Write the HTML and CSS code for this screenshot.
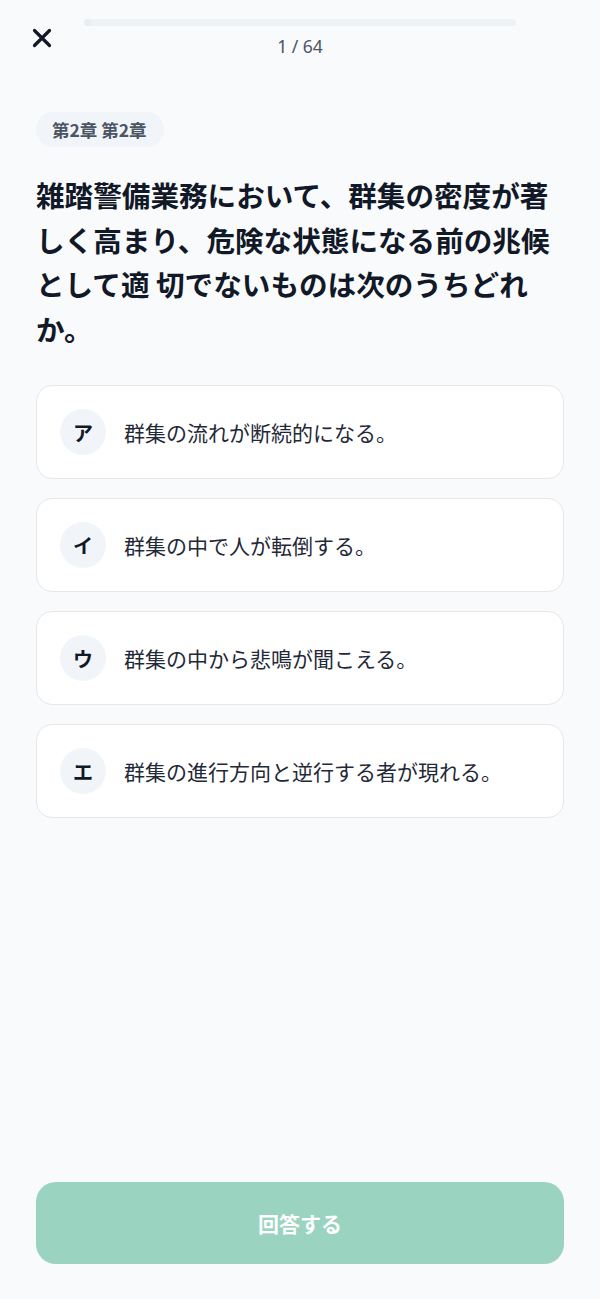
FILE: index.html
```html
<!DOCTYPE html>
<html lang="ja">
<head>
<meta charset="utf-8">
<title>Quiz</title>
<link rel="stylesheet" href="styles.css">
</head>
<body>
<div class="screen">
  <header class="header">
    <button class="close" aria-label="閉じる">
      <svg width="20" height="20" viewBox="0 0 20 20"><path d="M2.5 2.5 L17.5 17.5 M17.5 2.5 L2.5 17.5" stroke="#111827" stroke-width="3.2" stroke-linecap="round" fill="none"/></svg>
    </button>
    <div class="progress">
      <div class="bar"><div class="fill" style="width:1.5625%"></div></div>
      <div class="count">1 / 64</div>
    </div>
    <div></div>
  </header>

  <div class="tag">第2章 第2章</div>

  <h1 class="question">雑踏警備業務において、群集の密度が著しく高まり、危険な状態になる前の兆候として適 切でないものは次のうちどれか。</h1>

  <div class="options">
    <div class="option"><span class="badge">ア</span><span class="label">群集の流れが断続的になる。</span></div>
    <div class="option"><span class="badge">イ</span><span class="label">群集の中で人が転倒する。</span></div>
    <div class="option"><span class="badge">ウ</span><span class="label">群集の中から悲鳴が聞こえる。</span></div>
    <div class="option"><span class="badge">エ</span><span class="label">群集の進行方向と逆行する者が現れる。</span></div>
  </div>

  <button class="submit">回答する</button>
</div>
</body>
</html>
```

FILE: styles.css
```css
* { box-sizing: border-box; }
html, body { margin: 0; padding: 0; }
body {
  background: #f9fafb;
  font-family: "Noto Sans CJK JP", "Noto Sans", sans-serif;
  color: #111827;
}
.screen {
  min-height: 100vh;
  display: flex;
  flex-direction: column;
  align-items: stretch;
  padding: 0 36px 35px;
}
.header {
  display: grid;
  grid-template-columns: 52px 1fr 52px;
  margin: 0 -4px;
  padding-top: 19px;
}
.close {
  border: 0;
  background: none;
  padding: 0;
  margin-top: 9px;
  width: 20px;
  height: 20px;
  display: block;
}
.close svg { display: block; }
.progress { display: flex; flex-direction: column; align-items: center; }
.bar {
  width: 100%;
  height: 7px;
  border-radius: 4px;
  background: #eff2f5;
  overflow: hidden;
}
.fill { height: 100%; background: #e9eef2; }
.count {
  margin-top: 10px;
  font-family: "Noto Sans", sans-serif;
  font-size: 17.5px;
  line-height: 20px;
  color: #4b5563;
}
.tag {
  align-self: flex-start;
  margin-top: 56px;
  height: 35px;
  line-height: 35px;
  padding: 0 17px 0 16px;
  border-radius: 18px;
  background: #f1f4f8;
  color: #4b5563;
  font-weight: 700;
  font-size: 17.5px;
}
.question {
  margin: 26px 0 0;
  font-size: 28.6px;
  line-height: 44.5px;
  font-weight: 700;
  color: #111827;
}
.options {
  margin-top: 34px;
  display: flex;
  flex-direction: column;
  gap: 19px;
}
.option {
  height: 94px;
  background: #fff;
  border: 1px solid #e5e7eb;
  border-radius: 16px;
  padding: 0 23px;
  display: flex;
  align-items: center;
  gap: 18px;
}
.badge {
  width: 46px;
  height: 46px;
  border-radius: 50%;
  background: #f1f5f9;
  display: flex;
  align-items: center;
  justify-content: center;
  font-weight: 700;
  font-size: 20px;
  color: #111827;
  flex: none;
}
.label {
  font-size: 21px;
  color: #1f2937;
}
.submit {
  margin-top: auto;
  height: 82px;
  border: 0;
  border-radius: 20px;
  background: #9ad3bf;
  color: #fff;
  font-family: "Noto Sans CJK JP", "Noto Sans", sans-serif;
  font-weight: 700;
  font-size: 21px;
  width: 100%;
}
```
